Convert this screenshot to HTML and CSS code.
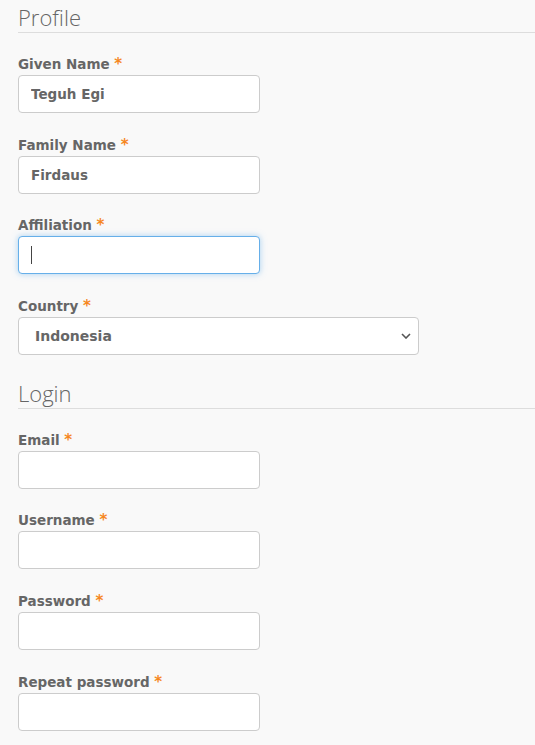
FILE: index.html
```html
<!DOCTYPE html>
<html>
<head>
<meta charset="utf-8">
<link rel="stylesheet" href="styles.css">
</head>
<body>
<form class="form">
  <fieldset class="section">
    <h2 class="section-title">Profile</h2>
    <div class="field">
      <label class="label">Given Name <span class="req">*</span></label>
      <input class="input" type="text" value="Teguh Egi">
    </div>
    <div class="field">
      <label class="label">Family Name <span class="req">*</span></label>
      <input class="input" type="text" value="Firdaus">
    </div>
    <div class="field">
      <label class="label">Affiliation <span class="req">*</span></label>
      <div class="input-wrap">
        <input class="input input-focus" type="text" value="">
        <span class="caret"></span>
      </div>
    </div>
    <div class="field">
      <label class="label">Country <span class="req">*</span></label>
      <div class="select">
        <span class="select-value">Indonesia</span>
        <svg class="chevron" width="10" height="6" viewBox="0 0 10 6"><path d="M1 1 L5 5 L9 1" fill="none" stroke="#555" stroke-width="1.6"/></svg>
      </div>
    </div>
  </fieldset>
  <fieldset class="section">
    <h2 class="section-title">Login</h2>
    <div class="field">
      <label class="label">Email <span class="req">*</span></label>
      <input class="input" type="text">
    </div>
    <div class="field">
      <label class="label">Username <span class="req">*</span></label>
      <input class="input" type="text">
    </div>
    <div class="field">
      <label class="label">Password <span class="req">*</span></label>
      <input class="input" type="password">
    </div>
    <div class="field">
      <label class="label">Repeat password <span class="req">*</span></label>
      <input class="input" type="password">
    </div>
  </fieldset>
</form>
</body>
</html>
```
FILE: styles.css
```css
html, body {
  margin: 0;
  padding: 0;
  background: #f9f9f9;
}
body {
  font-family: "DejaVu Sans", Verdana, sans-serif;
  color: #666;
  padding-left: 18px;
}
.form {
  margin: 0;
}
.section {
  border: 0;
  margin: 0;
  padding: 0;
  min-width: 0;
}
.section-title {
  font-family: "Open Sans", "Noto Sans", sans-serif;
  font-weight: 300;
  font-size: 22px;
  color: #666;
  margin: 0;
  padding: 0;
  height: 32px;
  line-height: 34px;
  border-bottom: 1px solid #ddd;
  margin-bottom: 21px;
}
.section + .section .section-title {
  height: 31px;
  line-height: 33px;
}
.field {
  display: flex;
  flex-direction: column;
  margin-bottom: 21.7px;
}
.label {
  font-size: 13.5px;
  font-weight: bold;
  line-height: 20px;
  height: 20px;
  color: #666;
  margin-bottom: 1px;
}
.req {
  color: #f6871f;
  font-size: 15px;
  line-height: 1;
}
.input {
  box-sizing: border-box;
  width: 242px;
  height: 38px;
  margin: 0;
  border: 1px solid #ccc;
  border-radius: 4px;
  background: #fff;
  padding: 0 12px;
  font-family: "DejaVu Sans", Verdana, sans-serif;
  font-size: 13.5px;
  font-weight: bold;
  color: #666;
  outline: none;
}
.input-wrap {
  position: relative;
  width: 242px;
  height: 38px;
}
.input-focus {
  border-color: #66afe9;
  box-shadow: 0 0 6px rgba(102, 175, 233, 0.55);
}
.caret {
  position: absolute;
  left: 13px;
  top: 10px;
  width: 1px;
  height: 18px;
  background: #444;
}
.select {
  box-sizing: border-box;
  width: 401px;
  height: 38px;
  border: 1px solid #ccc;
  border-radius: 4px;
  background: #fff;
  display: flex;
  align-items: center;
  justify-content: space-between;
  padding: 0 7px 0 16px;
  font-family: "DejaVu Sans", Verdana, sans-serif;
  font-size: 14px;
  font-weight: bold;
  color: #666;
}
.chevron {
  display: block;
}
```
